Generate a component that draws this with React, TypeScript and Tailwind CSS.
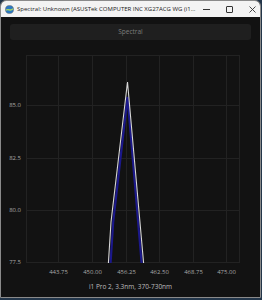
import React from "react";

const xs = [57, 91, 125, 158, 192, 225];
const xl = ["443.75", "450.00", "456.25", "462.50", "468.75", "475.00"];
const ys = [105, 158, 210, 262];
const yl = ["85.0", "82.5", "80.0", "77.5"];

function Chart() {
  return (
    <svg width={260} height={230} viewBox="0 48 260 230" className="block">
      <rect x={25.5} y={55.5} width={213} height={207} fill="none" stroke="#222222" strokeWidth={1} />
      {xs.map((x) => (
        <line key={x} x1={x + 0.5} y1={55} x2={x + 0.5} y2={263} stroke="#222222" strokeWidth={1} />
      ))}
      {ys.map((y) => (
        <line key={y} x1={25} y1={y + 0.5} x2={239} y2={y + 0.5} stroke="#222222" strokeWidth={1} />
      ))}
      <polyline
        points="109.6,263 112.2,222 126.5,97 140.6,263"
        fill="none"
        stroke="#1b188a"
        strokeWidth={2.2}
        strokeLinejoin="miter"
      />
      <polyline
        points="107.4,263 110,222 126.5,82 142.6,263"
        fill="none"
        stroke="#d6d6d6"
        strokeWidth={1.1}
      />
      {ys.map((y, i) => (
        <text key={y} x={20} y={y + 2} textAnchor="end" fontSize={6} fill="#a8a8a8" fontFamily="'Open Sans', sans-serif">
          {yl[i]}
        </text>
      ))}
      {xs.map((x, i) => (
        <text key={x} x={x + 0.5} y={274} textAnchor="middle" fontSize={6} fill="#a8a8a8" fontFamily="'Open Sans', sans-serif">
          {xl[i]}
        </text>
      ))}
    </svg>
  );
}

export default function App() {
  return (
    <div className="w-[262px] h-[300px] bg-[#23364a] overflow-hidden relative">
      <div className="w-[261px] h-[298px] flex flex-col border border-[#8a8a8a] rounded-t-[6px] overflow-hidden bg-[#121212]">
        <div className="h-[16px] shrink-0 bg-[#f3f3f3] flex items-center font-['Open_Sans',sans-serif] text-[6px] text-[#1a1a1a]">
          <svg width={9} height={9} viewBox="0 0 10 10" className="ml-[4px] mr-[3px] shrink-0">
            <circle cx={5} cy={5} r={4.5} fill="#2b78c2" />
            <path d="M1 6 C3 3, 6 8, 9 4" stroke="#9fd36a" strokeWidth={1.5} fill="none" />
            <circle cx={5} cy={5} r={4.5} fill="none" stroke="#6f6f6f" strokeWidth={0.6} />
          </svg>
          <span className="whitespace-nowrap leading-none">
            Spectral: Unknown (ASUSTek COMPUTER INC XG27ACG WG (i1...
          </span>
          <div className="flex items-center ml-auto h-full shrink-0">
            <div className="w-[23px] h-full flex items-center justify-center">
              <div className="w-[7px] h-px bg-[#333]" />
            </div>
            <div className="w-[23px] h-full flex items-center justify-center">
              <div className="w-[7px] h-[7px] border border-[#333] rounded-[1px]" />
            </div>
            <div className="w-[23px] h-full flex items-center justify-center">
              <svg width={7} height={7} viewBox="0 0 7 7">
                <path d="M0.5 0.5 L6.5 6.5 M6.5 0.5 L0.5 6.5" stroke="#333" strokeWidth={0.9} />
              </svg>
            </div>
          </div>
        </div>
        <div className="flex-1 flex flex-col bg-[#121212]">
          <div className="mx-[9px] mt-[7px] h-[16px] rounded-[3px] bg-[#1f1f1f] flex items-center justify-center text-[6.5px] text-[#7d7d7d] font-['Open_Sans',sans-serif]">
            Spectral
          </div>
          <div className="mt-[8px]">
            <Chart />
          </div>
          <div className="text-center text-[6.5px] text-[#bdbdbd] font-['Open_Sans',sans-serif] mt-[6px] leading-none">
            i1 Pro 2, 3.3nm, 370-730nm
          </div>
        </div>
      </div>
    </div>
  );
}
